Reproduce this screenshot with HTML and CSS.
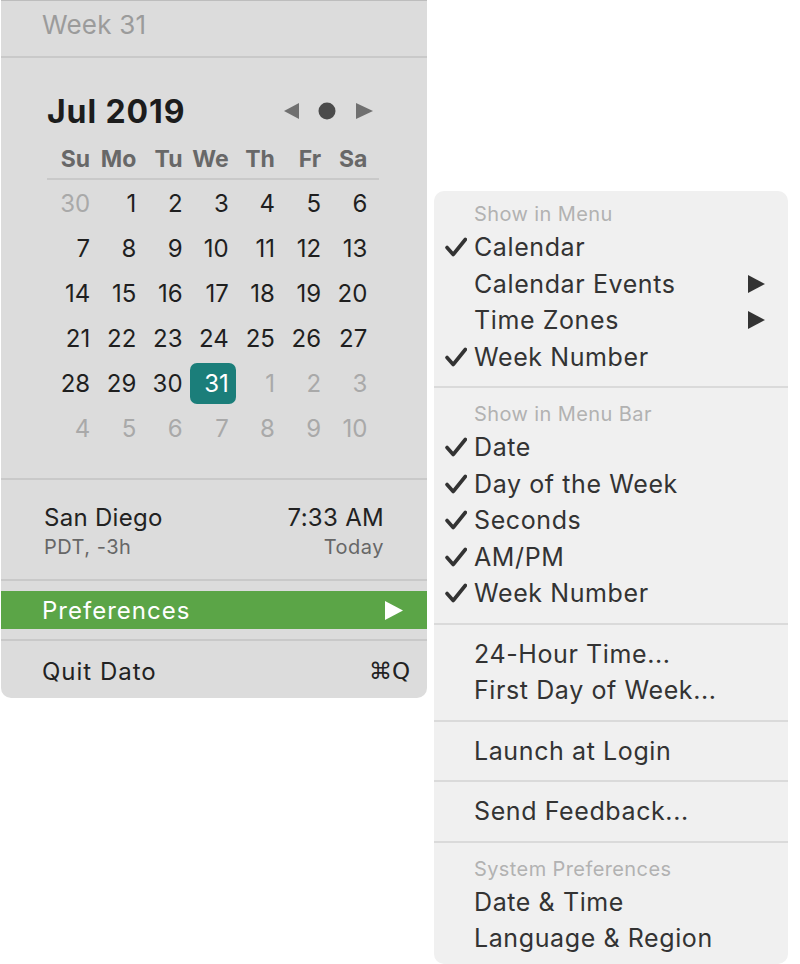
FILE: index.html
```html
<!DOCTYPE html>
<html lang="en">
<head>
    <meta charset="UTF-8">
    <meta name="viewport" content="width=device-width, initial-scale=1.0">
    <title>Dato Menu</title>
    <link rel="stylesheet" href="styles.css">
</head>
<body>
    <div class="screen">
        <!-- Main menu -->
        <div class="menu main-menu">
            <div class="week-row">Week 31</div>
            <div class="sep sep-top"></div>

            <div class="calendar">
                <div class="cal-head">
                    <span class="month">Jul 2019</span>
                    <svg class="nav" width="90" height="20" viewBox="0 0 90 20">
                        <polygon points="1,10 16,2 16,18" fill="#707070"/>
                        <circle cx="44" cy="10" r="8.5" fill="#4b4b4b"/>
                        <polygon points="73,2 73,18 90,10" fill="#707070"/>
                    </svg>
                </div>
                <div class="weekdays">
                    <span>Su</span><span>Mo</span><span>Tu</span><span>We</span><span>Th</span><span>Fr</span><span>Sa</span>
                </div>
                <div class="weekdays-line"></div>
                <div class="days">
                    <span class="other">30</span><span>1</span><span>2</span><span>3</span><span>4</span><span>5</span><span>6</span>
                    <span>7</span><span>8</span><span>9</span><span>10</span><span>11</span><span>12</span><span>13</span>
                    <span>14</span><span>15</span><span>16</span><span>17</span><span>18</span><span>19</span><span>20</span>
                    <span>21</span><span>22</span><span>23</span><span>24</span><span>25</span><span>26</span><span>27</span>
                    <span>28</span><span>29</span><span>30</span><span class="today">31</span><span class="other">1</span><span class="other">2</span><span class="other">3</span>
                    <span class="other">4</span><span class="other">5</span><span class="other">6</span><span class="other">7</span><span class="other">8</span><span class="other">9</span><span class="other">10</span>
                </div>
            </div>

            <div class="sep"></div>

            <div class="zone">
                <div class="zone-line">
                    <span class="city">San Diego</span>
                    <span class="time">7:33 AM</span>
                </div>
                <div class="zone-line sub">
                    <span>PDT, -3h</span>
                    <span>Today</span>
                </div>
            </div>

            <div class="sep"></div>

            <div class="menu-item active">
                <span>Preferences</span>
                <svg width="18" height="19" viewBox="0 0 18 19"><polygon points="0,0 18,9.5 0,19" fill="#ffffff"/></svg>
            </div>

            <div class="sep sep-mid"></div>

            <div class="menu-item quit">
                <span>Quit Dato</span>
                <span class="shortcut">⌘Q</span>
            </div>
        </div>

        <!-- Preferences submenu -->
        <div class="menu sub-menu">
            <div class="sub-header">Show in Menu</div>
            <div class="sub-item"><span class="check"><svg width="22" height="20" viewBox="0 0 22 20"><path d="M2 10.5 L8.2 17.5 L20.3 2.5" fill="none" stroke="#333" stroke-width="3.6" stroke-linecap="round" stroke-linejoin="round"/></svg></span>Calendar</div>
            <div class="sub-item"><span class="check"></span>Calendar Events<svg class="arrow" width="17" height="18" viewBox="0 0 17 18"><polygon points="0,0 17,9 0,18" fill="#333"/></svg></div>
            <div class="sub-item"><span class="check"></span>Time Zones<svg class="arrow" width="17" height="18" viewBox="0 0 17 18"><polygon points="0,0 17,9 0,18" fill="#333"/></svg></div>
            <div class="sub-item"><span class="check"><svg width="22" height="20" viewBox="0 0 22 20"><path d="M2 10.5 L8.2 17.5 L20.3 2.5" fill="none" stroke="#333" stroke-width="3.6" stroke-linecap="round" stroke-linejoin="round"/></svg></span>Week Number</div>

            <div class="sub-sep"></div>

            <div class="sub-header">Show in Menu Bar</div>
            <div class="sub-item"><span class="check"><svg width="22" height="20" viewBox="0 0 22 20"><path d="M2 10.5 L8.2 17.5 L20.3 2.5" fill="none" stroke="#333" stroke-width="3.6" stroke-linecap="round" stroke-linejoin="round"/></svg></span>Date</div>
            <div class="sub-item"><span class="check"><svg width="22" height="20" viewBox="0 0 22 20"><path d="M2 10.5 L8.2 17.5 L20.3 2.5" fill="none" stroke="#333" stroke-width="3.6" stroke-linecap="round" stroke-linejoin="round"/></svg></span>Day of the Week</div>
            <div class="sub-item"><span class="check"><svg width="22" height="20" viewBox="0 0 22 20"><path d="M2 10.5 L8.2 17.5 L20.3 2.5" fill="none" stroke="#333" stroke-width="3.6" stroke-linecap="round" stroke-linejoin="round"/></svg></span>Seconds</div>
            <div class="sub-item"><span class="check"><svg width="22" height="20" viewBox="0 0 22 20"><path d="M2 10.5 L8.2 17.5 L20.3 2.5" fill="none" stroke="#333" stroke-width="3.6" stroke-linecap="round" stroke-linejoin="round"/></svg></span>AM/PM</div>
            <div class="sub-item"><span class="check"><svg width="22" height="20" viewBox="0 0 22 20"><path d="M2 10.5 L8.2 17.5 L20.3 2.5" fill="none" stroke="#333" stroke-width="3.6" stroke-linecap="round" stroke-linejoin="round"/></svg></span>Week Number</div>

            <div class="sub-sep"></div>

            <div class="sub-item"><span class="check"></span>24-Hour Time...</div>
            <div class="sub-item"><span class="check"></span>First Day of Week...</div>

            <div class="sub-sep"></div>

            <div class="sub-item"><span class="check"></span>Launch at Login</div>

            <div class="sub-sep"></div>

            <div class="sub-item"><span class="check"></span>Send Feedback...</div>

            <div class="sub-sep"></div>

            <div class="sub-header">System Preferences</div>
            <div class="sub-item"><span class="check"></span>Date &amp; Time</div>
            <div class="sub-item"><span class="check"></span>Language &amp; Region</div>
        </div>
    </div>
</body>
</html>
```

FILE: styles.css
```css
body {
    margin: 0;
    background: #ffffff;
    font-family: 'Inter', 'Noto Sans', 'DejaVu Sans', sans-serif;
}

.screen {
    display: flex;
    align-items: flex-start;
    gap: 7px;
    padding-left: 1px;
}

.menu {
    box-sizing: border-box;
}

/* ---------- main menu ---------- */

.main-menu {
    width: 426px;
    background: #dcdcdc;
    border-top: 1px solid #bdbdbd;
    border-radius: 0 0 10px 10px;
    padding-bottom: 7px;
    color: #222;
}

.week-row {
    padding-left: 41px;
    line-height: 48px;
    padding-bottom: 7px;
    font-size: 26px;
    color: #9b9b9b;
    letter-spacing: 0.2px;
}

.sep {
    height: 2px;
    background: #c9c9c9;
}

.calendar {
    padding: 33px 0 29px 0;
}

.cal-head {
    display: flex;
    align-items: center;
    height: 40px;
    padding-left: 46px;
}

.month {
    font-size: 32px;
    font-weight: 700;
    color: #1c1c1c;
    letter-spacing: 0.9px;
}

.nav {
    margin-left: auto;
    margin-right: 54px;
}

.weekdays,
.days {
    display: grid;
    grid-template-columns: repeat(7, 46.2px);
    margin-left: 50px;
}

.weekdays {
    margin-top: 13px;
    line-height: 30px;
    font-size: 23px;
    font-weight: 700;
    color: #686868;
}

.weekdays span,
.days span {
    text-align: right;
    padding-right: 7px;
}

.weekdays-line {
    margin: 4px 0 3px 46px;
    width: 332px;
    height: 2px;
    background: #c9c9c9;
}

.days {
    row-gap: 4px;
    font-size: 24px;
    color: #1f1f1f;
}

.days span {
    height: 41px;
    line-height: 41px;
    border-radius: 7px;
}

.days .other {
    color: #a9a9a9;
}

.days .today {
    background: #1b7e7a;
    color: #ffffff;
}

.zone {
    padding: 23px 43px 19px 43px;
}

.zone-line {
    display: flex;
    justify-content: space-between;
    font-size: 24px;
    line-height: 30px;
    color: #222;
    letter-spacing: 0.3px;
}

.zone-line.sub {
    margin-top: 1px;
    font-size: 20px;
    line-height: 26px;
    color: #676767;
    letter-spacing: 0.5px;
}

.menu-item {
    display: flex;
    align-items: center;
    justify-content: space-between;
    padding: 0 24px 0 41px;
    height: 38px;
    margin-top: 10px;
    font-size: 24px;
    letter-spacing: 1px;
}

.menu-item.active {
    background: #5ba547;
    color: #ffffff;
}

.sep-mid {
    margin-top: 10px;
}

.menu-item.quit {
    height: 40px;
    padding-right: 17px;
}

.shortcut {
    font-family: 'DejaVu Sans', 'Inter', sans-serif;
    font-size: 23px;
    letter-spacing: 0;
}

/* ---------- preferences submenu ---------- */

.sub-menu {
    margin-top: 191px;
    width: 354px;
    background: #f0f0f0;
    border-radius: 10px;
    padding: 8px 0 7px 0;
    color: #333;
}

.sub-header {
    padding-left: 40px;
    line-height: 30px;
    font-size: 20px;
    color: #b2b2b2;
    letter-spacing: 0.4px;
}

.sub-item {
    display: flex;
    align-items: center;
    height: 36.5px;
    padding: 0 23px 0 11px;
    font-size: 25px;
    letter-spacing: 0.6px;
}

.check {
    display: flex;
    align-items: center;
    width: 29px;
    height: 20px;
}

.arrow {
    margin-left: auto;
}

.sub-sep {
    height: 2px;
    margin: 11px 0;
    background: #dadada;
}
```
